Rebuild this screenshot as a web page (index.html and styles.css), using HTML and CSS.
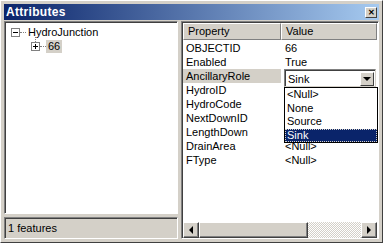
FILE: index.html
```html
<!DOCTYPE html>
<html>
  <head>
    <title>Attributes</title>
    <link rel="stylesheet" href="styles.css">
  </head>
  <body>
    <div class="window">
      <div class="titlebar">
        <span class="title">Attributes</span>
        <span class="close">&#x2715;</span>
      </div>
      <div class="content">
        <div class="left">
          <div class="tree">
            <div class="node root">
              <span class="box minus"></span>
              <span class="dots"></span>
              <span class="label">HydroJunction</span>
            </div>
            <div class="node child">
              <span class="vline"></span>
              <span class="box plus"></span>
              <span class="dots"></span>
              <span class="label selected">66</span>
            </div>
          </div>
          <div class="status">1 features</div>
        </div>
        <div class="right">
          <div class="grid">
            <div class="head">
              <div class="hcell prop">Property</div>
              <div class="hcell val">Value</div>
            </div>
            <div class="row"><div class="prop">OBJECTID</div><div class="val">66</div></div>
            <div class="row"><div class="prop">Enabled</div><div class="val">True</div></div>
            <div class="row"><div class="prop active">AncillaryRole</div><div class="val"></div></div>
            <div class="row"><div class="prop">HydroID</div><div class="val"></div></div>
            <div class="row"><div class="prop">HydroCode</div><div class="val"></div></div>
            <div class="row"><div class="prop">NextDownID</div><div class="val"></div></div>
            <div class="row"><div class="prop">LengthDown</div><div class="val"></div></div>
            <div class="row"><div class="prop">DrainArea</div><div class="val">&lt;Null&gt;</div></div>
            <div class="row"><div class="prop">FType</div><div class="val">&lt;Null&gt;</div></div>
          </div>
          <div class="hscroll">
            <div class="sbtn"><span class="arrow-left"></span></div>
            <div class="thumb"></div>
            <div class="track"></div>
            <div class="sbtn"><span class="arrow-right"></span></div>
          </div>

          <!-- combo editor sits over the AncillaryRole value cell -->
          <div class="combo">
            <span class="combo-text">Sink</span>
            <span class="combo-btn"><span class="arrow-down"></span></span>
          </div>
          <div class="droplist">
            <div class="item">&lt;Null&gt;</div>
            <div class="item">None</div>
            <div class="item">Source</div>
            <div class="item picked">Sink</div>
          </div>
        </div>
      </div>
    </div>
  </body>
</html>
```

FILE: styles.css
```css
* {
  box-sizing: border-box;
}

body {
  margin: 0;
  background: #d4d0c8;
  font-family: "Liberation Sans", Arial, sans-serif;
  font-size: 11px;
  color: #000;
}

.window {
  width: 383px;
  height: 243px;
  padding: 3px;
  border-top: 1px solid #ffffff;
  border-left: 1px solid #ffffff;
  border-right: 1px solid #404040;
  border-bottom: 1px solid #404040;
  display: flex;
  flex-direction: column;
}

.titlebar {
  height: 16px;
  background: linear-gradient(to right, #0a246a, #a6caf0);
  color: #fff;
  display: flex;
  align-items: center;
  justify-content: space-between;
  padding: 0 2px 0 2px;
}

.title {
  font-weight: bold;
  font-size: 12px;
  letter-spacing: 0.3px;
}

.close {
  width: 12px;
  height: 11px;
  background: #d4d0c8;
  color: #000;
  font-size: 8px;
  line-height: 10px;
  text-align: center;
  border-top: 1px solid #fff;
  border-left: 1px solid #fff;
  border-right: 1px solid #404040;
  border-bottom: 1px solid #404040;
  font-weight: bold;
}

.content {
  flex: 1;
  display: flex;
  gap: 3px;
  padding-top: 1px;
}

.left {
  width: 174px;
  display: flex;
  flex-direction: column;
  gap: 3px;
}

.tree {
  flex: 1;
  background: #fff;
  border-top: 1px solid #808080;
  border-left: 1px solid #808080;
  border-right: 1px solid #fff;
  border-bottom: 1px solid #fff;
  box-shadow: inset 1px 1px 0 #404040;
  padding: 4px 0 0 6px;
}

.node {
  display: flex;
  align-items: center;
  height: 13px;
  position: relative;
}

.child {
  margin-top: 1px;
  padding-left: 20px;
}

.box {
  width: 9px;
  height: 9px;
  border: 1px solid #808080;
  background: #fff;
  position: relative;
}

.box::before {
  content: "";
  position: absolute;
  left: 1px;
  top: 3px;
  width: 5px;
  height: 1px;
  background: #000;
}

.plus::after {
  content: "";
  position: absolute;
  left: 3px;
  top: 1px;
  width: 1px;
  height: 5px;
  background: #000;
}

.dots {
  width: 6px;
  border-top: 1px dotted #808080;
}

.vline {
  position: absolute;
  left: 24px;
  top: -3px;
  height: 7px;
  border-left: 1px dotted #808080;
}

.label {
  padding: 0 2px;
  line-height: 13px;
}

.selected {
  background: #d4d0c8;
}

.status {
  height: 22px;
  border-top: 1px solid #808080;
  border-left: 1px solid #808080;
  border-right: 1px solid #fff;
  border-bottom: 1px solid #fff;
  box-shadow: inset 1px 1px 0 #404040;
  padding: 4px 0 0 3px;
}

.right {
  flex: 1;
  position: relative;
  background: #fff;
  border-top: 1px solid #808080;
  border-left: 1px solid #808080;
  border-right: 1px solid #fff;
  border-bottom: 1px solid #fff;
  box-shadow: inset 1px 1px 0 #404040;
  padding: 1px 1px 0 1px;
  display: flex;
  flex-direction: column;
}

.grid {
  flex: 1;
}

.head {
  display: flex;
  height: 17px;
}

.hcell {
  background: #d4d0c8;
  border-top: 1px solid #fff;
  border-left: 1px solid #fff;
  border-right: 1px solid #808080;
  border-bottom: 1px solid #808080;
  padding: 1px 0 0 4px;
  line-height: 13px;
}

.prop {
  width: 98px;
}

.hcell.val {
  flex: 1;
}

.row {
  display: flex;
  height: 14px;
  line-height: 14px;
}

.row:nth-child(2) {
  margin-top: 1px;
}

.row .prop {
  padding-left: 3px;
  margin-right: 3px;
}

.row .val {
  padding-left: 1px;
}

.active {
  background: #d4d0c8;
}

.hscroll {
  height: 16px;
  display: flex;
}

.sbtn {
  width: 16px;
  height: 16px;
  background: #d4d0c8;
  border-top: 1px solid #fff;
  border-left: 1px solid #fff;
  border-right: 1px solid #404040;
  border-bottom: 1px solid #404040;
  box-shadow: inset -1px -1px 0 #808080;
  display: flex;
  align-items: center;
  justify-content: center;
}

.arrow-left {
  border-right: 4px solid #000;
  border-top: 4px solid transparent;
  border-bottom: 4px solid transparent;
}

.arrow-right {
  border-left: 4px solid #000;
  border-top: 4px solid transparent;
  border-bottom: 4px solid transparent;
}

.thumb {
  width: 109px;
  background: #d4d0c8;
  border-top: 1px solid #fff;
  border-left: 1px solid #fff;
  border-right: 1px solid #404040;
  border-bottom: 1px solid #404040;
  box-shadow: inset -1px -1px 0 #808080;
}

.track {
  flex: 1;
  background-color: #fff;
  background-image: repeating-conic-gradient(#d4d0c8 0 25%, #fff 0 50%);
  background-size: 2px 2px;
}

.combo {
  position: absolute;
  left: 102px;
  top: 47px;
  width: 92px;
  height: 18px;
  background: #fff;
  border-top: 1px solid #808080;
  border-left: 1px solid #808080;
  border-right: 1px solid #d4d0c8;
  border-bottom: 1px solid #d4d0c8;
  box-shadow: inset 1px 1px 0 #404040;
  display: flex;
  align-items: center;
  padding: 1px 1px 0 3px;
}

.combo-text {
  flex: 1;
}

.combo-btn {
  width: 14px;
  height: 14px;
  background: #d4d0c8;
  border-top: 1px solid #fff;
  border-left: 1px solid #fff;
  border-right: 1px solid #404040;
  border-bottom: 1px solid #404040;
  display: flex;
  align-items: center;
  justify-content: center;
}

.arrow-down {
  border-top: 4px solid #000;
  border-left: 4px solid transparent;
  border-right: 4px solid transparent;
}

.droplist {
  position: absolute;
  left: 102px;
  top: 65px;
  width: 94px;
  background: #fff;
  border: 1px solid #000;
  padding: 0;
}

.item {
  height: 13.5px;
  line-height: 13px;
  padding-left: 2px;
}

.picked {
  background: #0a246a;
  color: #fff;
  outline: 1px dotted #d4d0c8;
  outline-offset: -1px;
}
```
